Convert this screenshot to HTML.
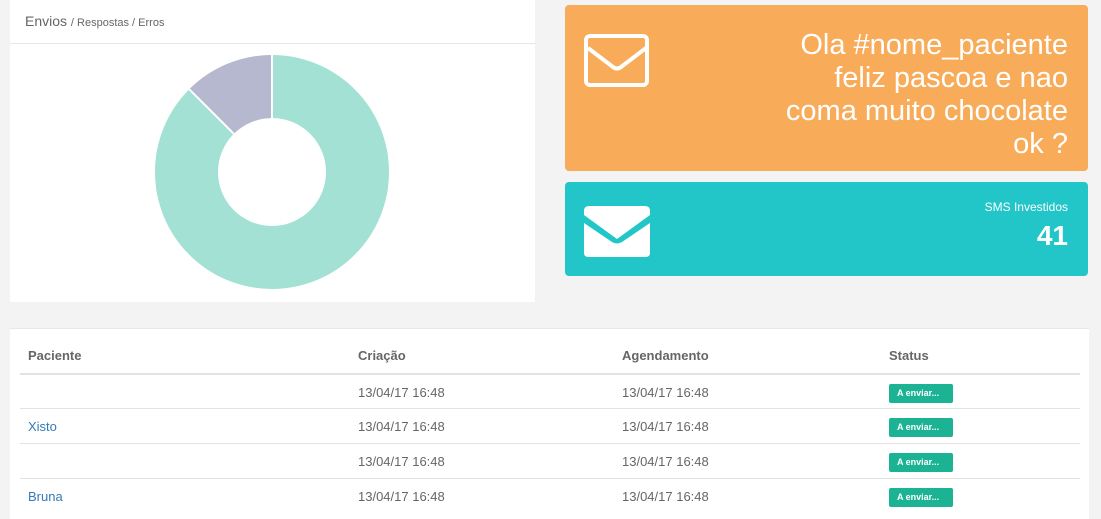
<!DOCTYPE html>
<html><head><style>
body{margin:0;width:1101px;height:513px;background:#f3f3f3;font-family:"Liberation Sans",sans-serif;position:relative;overflow:hidden}
.p{position:absolute;background:#fff}
.card{position:absolute;border-radius:4px;color:#fff}
.row{position:absolute;left:20px;width:1060px;border-top:1px solid #e3e3e3;height:34px}
.c{position:absolute;font-size:13px;color:#666;top:10px}
.b{position:absolute;left:869px;top:9px;background:#1bb394;color:#fff;font-size:9px;font-weight:bold;padding:4px 8px;border-radius:2px;width:48px;height:11px;line-height:11px}
</style></head><body>
<div class="p" style="left:10px;top:0;width:525px;height:302px">
<div style="position:absolute;left:15px;top:13px;font-size:14px;color:#666">Envios <span style="font-size:11px">/ Respostas / Erros</span></div>
<div style="position:absolute;left:0;top:43px;width:525px;border-top:1px solid #e7e7e7"></div>
</div>
<svg style="position:absolute;left:0;top:0" width="540" height="300">
<circle cx="272" cy="172" r="85.5" fill="none" stroke="#a3e1d4" stroke-width="63"/>
<path d="M272 55 L272 118 A54 54 0 0 0 233.8 133.8 L189.3 89.3 A117 117 0 0 1 272 55Z" fill="#b5b8cf"/>
<line x1="272" y1="55" x2="272" y2="118" stroke="#fff" stroke-width="2"/>
<line x1="189.3" y1="89.3" x2="233.8" y2="133.8" stroke="#fff" stroke-width="2"/>
</svg>
<div class="card" style="left:565px;top:5px;width:523px;height:166px;background:#f8ac59">
<svg style="position:absolute;left:19px;top:29px" width="66" height="53"><rect x="2" y="2" width="61" height="49" rx="4" fill="none" stroke="#fff" stroke-width="4"/><path d="M4 14 L29 33 Q33 36 37 33 L62 14" fill="none" stroke="#fff" stroke-width="4"/></svg>
<div style="position:absolute;right:20px;top:24px;text-align:right;font-size:29px;line-height:33px;white-space:nowrap">Ola #nome_paciente<br>feliz pascoa e nao<br>coma muito chocolate<br>ok ?</div>
</div>
<div class="card" style="left:565px;top:182px;width:523px;height:94px;background:#23c6c8">
<svg style="position:absolute;left:19px;top:24px" width="66" height="53"><path d="M0 5 Q0 0 5 0 L61 0 Q66 0 66 5 L66 9 L33 33 L0 9Z" fill="#fff"/><path d="M0 17 L28 36 Q33 39 38 36 L66 17 L66 47 Q66 51 61 51 L5 51 Q0 51 0 47Z" fill="#fff"/></svg>
<div style="position:absolute;right:20px;top:18px;font-size:12px">SMS Investidos</div>
<div style="position:absolute;right:20px;top:38px;font-size:28px;font-weight:bold">41</div>
</div>
<div class="p" style="left:10px;top:328px;width:1079px;height:190px;border-top:1px solid #e7e7e7"></div>
<div style="position:absolute;top:348px;left:28px;font-size:13px;font-weight:bold;color:#666">Paciente</div>
<div style="position:absolute;top:348px;left:358px;font-size:13px;font-weight:bold;color:#666">Criação</div>
<div style="position:absolute;top:348px;left:622px;font-size:13px;font-weight:bold;color:#666">Agendamento</div>
<div style="position:absolute;top:348px;left:889px;font-size:13px;font-weight:bold;color:#666">Status</div>
<div class="row" style="top:373px;border-top:2px solid #e3e3e3"><span class="c" style="left:338px">13/04/17 16:48</span><span class="c" style="left:602px">13/04/17 16:48</span><span class="b">A enviar...</span></div>
<div class="row" style="top:408px"><span class="c" style="left:8px;color:#337ab7">Xisto</span><span class="c" style="left:338px">13/04/17 16:48</span><span class="c" style="left:602px">13/04/17 16:48</span><span class="b">A enviar...</span></div>
<div class="row" style="top:443px"><span class="c" style="left:338px">13/04/17 16:48</span><span class="c" style="left:602px">13/04/17 16:48</span><span class="b">A enviar...</span></div>
<div class="row" style="top:478px"><span class="c" style="left:8px;color:#337ab7">Bruna</span><span class="c" style="left:338px">13/04/17 16:48</span><span class="c" style="left:602px">13/04/17 16:48</span><span class="b">A enviar...</span></div>
</body></html>
